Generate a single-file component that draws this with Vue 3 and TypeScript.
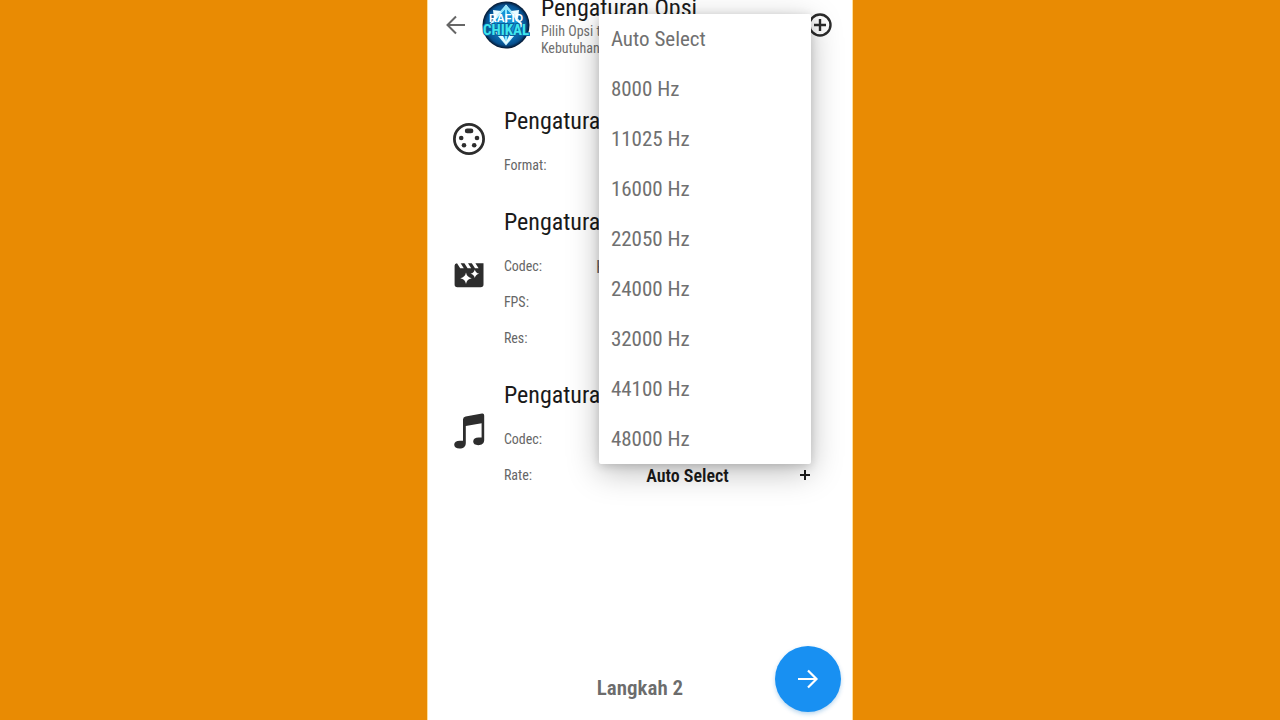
<script setup lang="ts">
import { ref } from 'vue'

interface Row {
  label: string
  value: string
}
interface Section {
  icon: 'format' | 'video' | 'audio'
  title: string
  rows: Row[]
}

const rates: string[] = [
  'Auto Select',
  '8000 Hz',
  '11025 Hz',
  '16000 Hz',
  '22050 Hz',
  '24000 Hz',
  '32000 Hz',
  '44100 Hz',
  '48000 Hz',
]

const selectedRate = ref<string>('Auto Select')
const menuOpen = ref<boolean>(true)

const sections: Section[] = [
  { icon: 'format', title: 'Pengaturan', rows: [{ label: 'Format', value: '' }] },
  {
    icon: 'video',
    title: 'Pengaturan',
    rows: [
      { label: 'Codec', value: 'H264' },
      { label: 'FPS', value: '' },
      { label: 'Res', value: '' },
    ],
  },
  {
    icon: 'audio',
    title: 'Pengaturan',
    rows: [
      { label: 'Codec', value: '' },
      { label: 'Rate', value: 'rate' },
    ],
  },
]

function choose(rate: string): void {
  selectedRate.value = rate
  menuOpen.value = false
}
</script>

<template>
  <div class="stage">
    <main class="phone">
      <header class="bar">
        <button class="plain back" type="button" aria-label="Kembali">
          <svg width="20" height="20" viewBox="0 0 20 20">
            <path d="M19 10H2M10 1.500L1.500 10l8.500 8.500" fill="none" stroke="#666" stroke-width="2" />
          </svg>
        </button>
        <svg class="logo" width="48" height="48" viewBox="0 0 48 48" aria-hidden="true">
          <defs>
            <radialGradient id="glow">
              <stop offset="0" stop-color="#35c4f5" />
              <stop offset="0.55" stop-color="#0b72b8" />
              <stop offset="0.85" stop-color="#07508f" />
              <stop offset="1" stop-color="#04142c" />
            </radialGradient>
          </defs>
          <circle cx="24" cy="24" r="23.500" fill="url(#glow)" />
          <path d="M24 5L40 24 24 43 8 24z" fill="#1593d6" stroke="#c8f4ff" stroke-width="2" />
          <path d="M24 5v36M19 11l5-5 5 5" fill="none" stroke="#8be4fb" stroke-width="2" />
          <path d="M11 9l8 1-7 8zM37 9l-8 1 7 8zM15 32l5 1 4 8 4-8 5-1-9 11z" fill="#e8fbff" />
          <text x="24" y="21" class="logo-top" text-anchor="middle">RAFIQ</text>
          <text x="24" y="34" class="logo-name" text-anchor="middle">CHIKAL</text>
        </svg>
        <div class="heading">
          <h1>Pengaturan Opsi</h1>
          <p>Pilih Opsi tentang<br />Kebutuhan Anda</p>
        </div>
        <button class="plain add" type="button" aria-label="Tambah">
          <svg width="24" height="24" viewBox="0 0 24 24">
            <circle cx="12" cy="12" r="10.500" fill="none" stroke="#2b2b2b" stroke-width="2.400" />
            <path d="M12 6v12M6 12h12" stroke="#2b2b2b" stroke-width="2.400" />
          </svg>
        </button>
      </header>

      <div class="sections">
        <section v-for="s in sections" :key="s.icon" class="section">
          <svg v-if="s.icon === 'format'" class="icon" width="32" height="32" viewBox="0 0 32 32">
            <circle cx="16" cy="16" r="14.600" fill="none" stroke="#2d2d2d" stroke-width="2.800" />
            <rect x="11.800" y="5.500" width="8.600" height="4.800" rx="2.400" fill="#2d2d2d" />
            <g fill="#2d2d2d">
              <circle cx="8.200" cy="15" r="2.300" />
              <circle cx="24" cy="15" r="2.300" />
              <circle cx="11" cy="22.200" r="2.300" />
              <circle cx="21.200" cy="22.200" r="2.300" />
            </g>
          </svg>
          <svg v-else-if="s.icon === 'video'" class="icon" width="32" height="32" viewBox="0 0 32 32">
            <path
              d="M4 3.200l3.200 5h3.600l-3.200-5h3.800l3.200 5h3.600l-3.200-5h3.800l3.200 5h3.600l-3.200-5H30.500V24.500q0 2.800-2.800 2.800H4.400q-2.800 0-2.800-2.800V5.500q0-2 2.400-2.300z"
              fill="#2d2d2d"
            />
            <path d="M13 12.500q.9 4.900 5.700 5.700-4.800.9-5.700 5.700-.9-4.800-5.700-5.700 4.800-.8 5.700-5.700z" fill="#fff" />
            <path d="M21.800 9.500q.7 3.500 4.300 4.200-3.600.7-4.300 4.300-.7-3.600-4.300-4.300 3.600-.7 4.300-4.200z" fill="#fff" />
          </svg>
          <svg v-else class="icon" width="32" height="36" viewBox="0 0 32 36">
            <path
              d="M10 6.500q0-2.500 2.600-3L29 .600q2.200-.300 2.200 1.800V27c0 3.400-2.400 5.200-6 5.200-3.200 0-5-1.400-5-3.600 0-2.800 2.200-4.200 5.400-4.200h3V10.200L12.800 13v17c0 3.600-2.400 5.600-6.200 5.600-3.400 0-5.400-1.500-5.400-3.800 0-2.700 2.200-4.100 5.600-4.100H10z"
              fill="#2d2d2d"
            />
          </svg>
          <div class="body">
            <h2>{{ s.title }}</h2>
            <div v-for="r in s.rows" :key="r.label" class="row">
              <span class="label">{{ r.label }}:</span>
              <button
                v-if="r.value === 'rate'"
                class="plain picker"
                type="button"
                aria-haspopup="listbox"
                :aria-expanded="menuOpen"
                @click="menuOpen = !menuOpen"
              >
                <span class="current">{{ selectedRate }}</span>
                <svg width="12" height="12" viewBox="0 0 12 12">
                  <path d="M6 1v10M1 6h10" stroke="#1a1a1a" stroke-width="2" />
                </svg>
              </button>
              <span v-else class="value">{{ r.value }}</span>
            </div>
          </div>
        </section>
      </div>

      <ul v-if="menuOpen" class="menu" role="listbox" aria-label="Rate">
        <li v-for="rate in rates" :key="rate">
          <button
            class="plain option"
            type="button"
            role="option"
            :aria-selected="rate === selectedRate"
            @click="choose(rate)"
          >
            {{ rate }}
          </button>
        </li>
      </ul>

      <footer class="footer">
        <span class="step">Langkah 2</span>
        <button class="plain next" type="button" aria-label="Lanjut">
          <svg width="22" height="20" viewBox="0 0 22 20">
            <path d="M1 10h18M11 1.500l8.500 8.500-8.500 8.500" fill="none" stroke="#fff" stroke-width="2.200" />
          </svg>
        </button>
      </footer>
    </main>
  </div>
</template>

<style>
body {
  margin: 0;
  background: #e98b03;
}
</style>

<style scoped>
.stage {
  min-height: 100vh;
  display: flex;
  justify-content: center;
  overflow: hidden;
  background: #e98b03;
  font-family: 'Liberation Sans Narrow', 'Roboto Condensed', 'DejaVu Sans Condensed', sans-serif;
  color: #1a1a1a;
}
.phone {
  position: relative;
  box-sizing: border-box;
  width: 33.3%;
  min-width: 426px;
  min-height: 100vh;
  display: flex;
  flex-direction: column;
  background: #fff;
  border: solid #ffe09a;
  border-width: 0 1px;
}
.plain {
  border: 0;
  padding: 0;
  margin: 0;
  background: none;
  font: inherit;
  color: inherit;
  cursor: pointer;
}
svg {
  display: block;
  flex: none;
}
.bar {
  height: 50px;
  display: flex;
  align-items: center;
  padding: 0 20px 0 18px;
}
.logo {
  margin: 0 11px 0 16px;
}
.logo-top {
  font: bold 11px 'Liberation Sans', sans-serif;
  fill: #fff;
}
.logo-name {
  font: bold 15px 'Roboto Condensed', sans-serif;
  fill: #3fe6ee;
  stroke: #0a5f9c;
  stroke-width: 2px;
  paint-order: stroke;
}
.heading {
  flex: 1;
  white-space: nowrap;
}
h1,
h2,
p {
  margin: 0;
  font-weight: normal;
}
h1 {
  font-size: 24px;
  line-height: 30px;
}
p {
  font-size: 14px;
  line-height: 17px;
  color: #707070;
}
.sections {
  margin-top: 45px;
  display: flex;
  flex-direction: column;
  gap: 13px;
}
.section {
  display: flex;
  align-items: center;
  gap: 19px;
  padding: 0 41px 0 25px;
}
.body {
  flex: 1;
}
h2 {
  font-size: 24px;
  line-height: 52px;
}
.row {
  height: 36px;
  display: flex;
  align-items: center;
}
.label {
  width: 92px;
  font-size: 14px;
  color: #666;
}
.value {
  font-size: 18px;
  color: #666;
}
.picker {
  flex: 1;
  display: flex;
  align-items: center;
}
.current {
  flex: 1;
  padding: 0 22px 0 2px;
  text-align: center;
  font-size: 18px;
  font-weight: 600;
}
.menu {
  position: absolute;
  top: 14px;
  left: 171px;
  right: 41px;
  margin: 0;
  padding: 0;
  list-style: none;
  background: #fff;
  border-radius: 2px;
  box-shadow: 0 8px 32px rgba(0, 0, 0, 0.26), 0 2px 10px rgba(0, 0, 0, 0.16);
}
.option {
  display: block;
  width: 100%;
  height: 50px;
  padding: 0 12px;
  text-align: left;
  font-size: 21px;
  color: #707070;
}
.footer {
  margin-top: auto;
  display: grid;
  grid-template-columns: 1fr auto 1fr;
  align-items: center;
  padding: 0 11px 8px;
}
.step {
  grid-column: 2;
  padding-top: 18px;
  font-size: 21px;
  font-weight: 600;
  color: #6c6c6c;
}
.next {
  justify-self: end;
  width: 66px;
  height: 66px;
  border-radius: 50%;
  display: flex;
  align-items: center;
  justify-content: center;
  background: #1890f2;
  box-shadow: 0 2px 4px rgba(24, 120, 200, 0.3);
}
</style>
